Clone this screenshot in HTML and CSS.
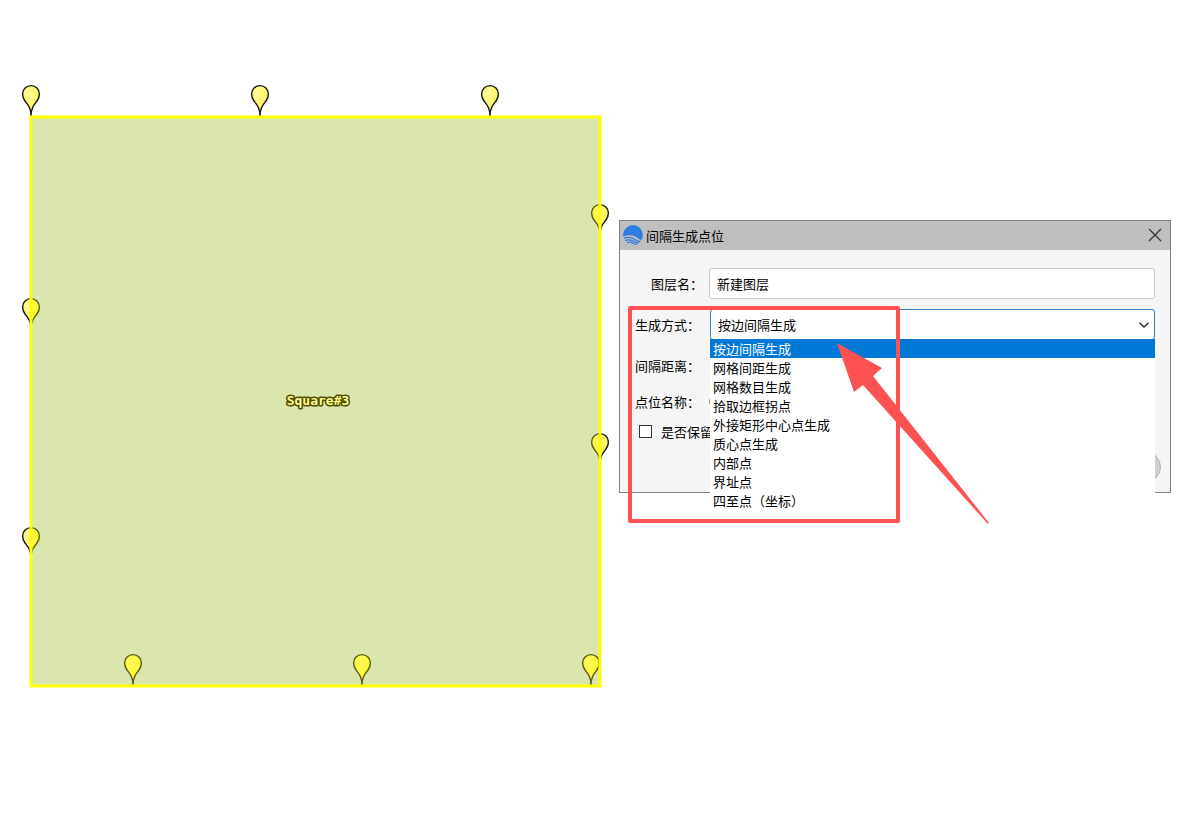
FILE: index.html
```html
<!DOCTYPE html>
<html lang="zh-CN">
<head>
  <meta charset="UTF-8">
  <meta name="viewport" content="width=device-width, initial-scale=1.0">
  <title>间隔生成点位</title>
  <link rel="stylesheet" href="styles.css">
</head>
<body>
  <main class="workspace">
    <svg class="map" viewBox="20 84 591 604" width="591" height="604">
      <defs>
        <radialGradient id="head" cx="35%" cy="20%" r="70%">
          <stop offset="0" stop-color="#fffa9c"/>
          <stop offset="1" stop-color="#fff552"/>
        </radialGradient>
        <radialGradient id="head-in" cx="35%" cy="20%" r="70%">
          <stop offset="0" stop-color="#fffa5c"/>
          <stop offset="1" stop-color="#fff52a"/>
        </radialGradient>
        <!-- Origin is the tip of the pin -->
        <path id="pin" d="M0 0C0 -8 -3 -11 -6 -15C-7.600 -17.200 -8.400 -19 -8.400 -22A8.400 8.400 0 0 1 8.400 -22C8.400 -19 7.600 -17.200 6 -15C3 -11 0 -8 0 0Z"/>
        <g id="pins">
          <use href="#pin" x="31" y="116"/>
          <use href="#pin" x="260" y="116"/>
          <use href="#pin" x="490" y="116"/>
          <use href="#pin" x="600" y="235"/>
          <use href="#pin" x="600" y="464"/>
          <use href="#pin" x="31" y="329"/>
          <use href="#pin" x="31" y="558"/>
          <use href="#pin" x="133" y="685"/>
          <use href="#pin" x="362" y="685"/>
          <use href="#pin" x="591" y="685"/>
        </g>
        <clipPath id="area">
          <rect x="31" y="117" width="569" height="569"/>
        </clipPath>
      </defs>
      <use class="pins" href="#pins"/>
      <rect class="area" x="31" y="117" width="569" height="569"/>
      <g clip-path="url(#area)">
        <use class="pins pins-inside" href="#pins"/>
      </g>
      <rect class="outline" x="31" y="117" width="569" height="569"/>
      <text class="area-name" x="318" y="405">Square#3</text>
    </svg>

    <section class="dialog">
      <header class="titlebar">
        <svg class="logo" viewBox="0 0 20 20" width="20" height="20">
          <path fill="#2f7de1" d="M0.300 11.500A9.800 9.800 0 1 1 18.400 15C15.500 14.800 13 10.500 7.500 10.300C4.500 10.200 2.500 11 0.300 11.500Z"/>
          <g fill="none" stroke="#2f7de1" stroke-width="1.200">
            <path d="M1 13.400C7 10.800 10.500 13.200 13 15.200C14.500 16.400 16 16.600 17.600 16.200"/>
            <path d="M2 15.600C7 13.400 9.500 15.400 12 17C13.500 18 14.800 18.200 16 17.700"/>
            <path d="M4 17.700C7 16.200 9 17.600 11 18.700C12 19.200 13 19.300 14 19"/>
          </g>
        </svg>
        <h1>间隔生成点位</h1>
        <button type="button" class="close" aria-label="关闭">
          <svg viewBox="0 0 14 14" width="14" height="14"><path d="M1 1L13 13M13 1L1 13"/></svg>
        </button>
      </header>

      <form class="form">
        <div class="row">
          <label class="indent" for="layer">图层名：</label>
          <input type="text" id="layer" class="field" value="新建图层">
        </div>
        <div class="row">
          <label for="mode">生成方式：</label>
          <div class="combo">
            <select id="mode" class="field">
              <option>按边间隔生成</option>
              <option>网格间距生成</option>
              <option>网格数目生成</option>
              <option>拾取边框拐点</option>
              <option>外接矩形中心点生成</option>
              <option>质心点生成</option>
              <option>内部点</option>
              <option>界址点</option>
              <option>四至点（坐标）</option>
            </select>
            <svg class="chevron" viewBox="0 0 10 6" width="10" height="6"><path d="M0.500 0.800L5 5L9.500 0.800"/></svg>
            <ul class="options">
              <li class="selected">按边间隔生成</li>
              <li>网格间距生成</li>
              <li>网格数目生成</li>
              <li>拾取边框拐点</li>
              <li>外接矩形中心点生成</li>
              <li>质心点生成</li>
              <li>内部点</li>
              <li>界址点</li>
              <li>四至点（坐标）</li>
            </ul>
          </div>
        </div>
        <div class="row">
          <label for="distance">间隔距离：</label>
          <input type="text" id="distance" class="field covered">
        </div>
        <div class="row short">
          <label for="naming">点位名称：</label>
          <input type="radio" id="naming" class="radio">
        </div>
        <div class="row short">
          <input type="checkbox" id="keep" class="check">
          <label for="keep">是否保留</label>
        </div>
        <div class="actions">
          <button type="button" class="ok" aria-label="确定"></button>
        </div>
      </form>

      <div class="highlight"></div>
      <svg class="arrow" viewBox="0 0 154 183" width="154" height="183">
        <path d="M1 1L46 26L37 34L153 181L152 182L27 43L18 50Z"/>
      </svg>
    </section>
  </main>
</body>
</html>
```
FILE: styles.css
```css
* {
  box-sizing: border-box;
}
body {
  margin: 0;
  background: #fff;
  color: #000;
  font-family: "Noto Sans CJK SC", sans-serif;
  font-size: 13px;
}
.workspace {
  display: flex;
  align-items: flex-start;
  gap: 8px;
  padding: 84px 30px 0 20px;
}

/* Map */
.map {
  flex: none;
}
.pins {
  fill: url(#head);
  stroke: #151515;
  stroke-width: 1.4px;
}
.pins-inside {
  fill: url(#head-in);
  stroke: #5a5a12;
}
.area {
  fill: #dae6ae;
}
.outline {
  fill: none;
  stroke: #ff0;
  stroke-width: 3px;
}
.area-name {
  font-family: "DejaVu Sans Mono", monospace;
  font-size: 13px;
  font-weight: bold;
  text-anchor: middle;
  fill: #fffa96;
  stroke: #504c00;
  stroke-width: 3px;
  stroke-linejoin: round;
  paint-order: stroke;
}

/* Dialog */
.dialog {
  position: relative;
  flex: 1;
  margin-top: 136px;
  border: 1px solid #808080;
  background: #f5f5f5;
}
.titlebar {
  display: flex;
  align-items: center;
  gap: 3px;
  height: 29px;
  padding: 0 8px 1px 3px;
  background: #bfbfbf;
}
.titlebar h1 {
  flex: 1;
  margin: 0;
  font-size: 13px;
  font-weight: normal;
}
.close {
  display: flex;
  padding: 0;
  border: 0;
  background: none;
}
.close path {
  stroke: #333;
  stroke-width: 1.3px;
}

.form {
  display: flex;
  flex-direction: column;
  gap: 10px;
  padding: 18px 15px 9px;
}
.row {
  display: flex;
  align-items: center;
  height: 31px;
}
.row.short {
  height: 20px;
}
.row label {
  flex: none;
  width: 74px;
}
.row .indent {
  padding-left: 16px;
}
.field {
  flex: 1;
  width: 100%;
  height: 31px;
  padding: 0 7px;
  border: 1px solid #c8c8c8;
  border-radius: 3px;
  background: #fff;
  color: #000;
  font: inherit;
}
.covered {
  margin-left: 1px;
}
.combo {
  position: relative;
  flex: 1;
  margin-left: 1px;
}
.combo .field {
  display: block;
  border-color: #2f82c8;
  appearance: none;
}
.chevron {
  position: absolute;
  top: 13px;
  right: 6px;
  pointer-events: none;
}
.chevron path {
  fill: none;
  stroke: #222;
  stroke-width: 1.4px;
}
.options {
  position: absolute;
  z-index: 1;
  top: 30px;
  left: 0;
  right: 0;
  margin: 0;
  padding: 0;
  background: #fff;
  list-style: none;
}
.options li {
  height: 19px;
  padding-left: 3px;
  line-height: 19px;
}
.options .selected {
  background: #0078d7;
  color: #fff;
}
.radio {
  margin: 0;
}
.check {
  width: 13px;
  height: 13px;
  margin: 0 9px 0 4px;
  border: 1px solid #333;
  background: #fff;
  appearance: none;
}
.actions {
  display: flex;
  justify-content: flex-end;
  margin-right: -6px;
}
.ok {
  width: 80px;
  height: 32px;
  border: 1px solid #b4b4b4;
  border-radius: 16px;
  background: #d0d0d0;
}

/* Callout */
.highlight {
  position: absolute;
  z-index: 2;
  top: 85px;
  left: 8px;
  width: 272px;
  height: 217px;
  border: 4px solid #fd5252;
  border-radius: 2px;
  pointer-events: none;
}
.arrow {
  position: absolute;
  z-index: 2;
  top: 121px;
  left: 216px;
  fill: #fd5252;
  pointer-events: none;
}
```
